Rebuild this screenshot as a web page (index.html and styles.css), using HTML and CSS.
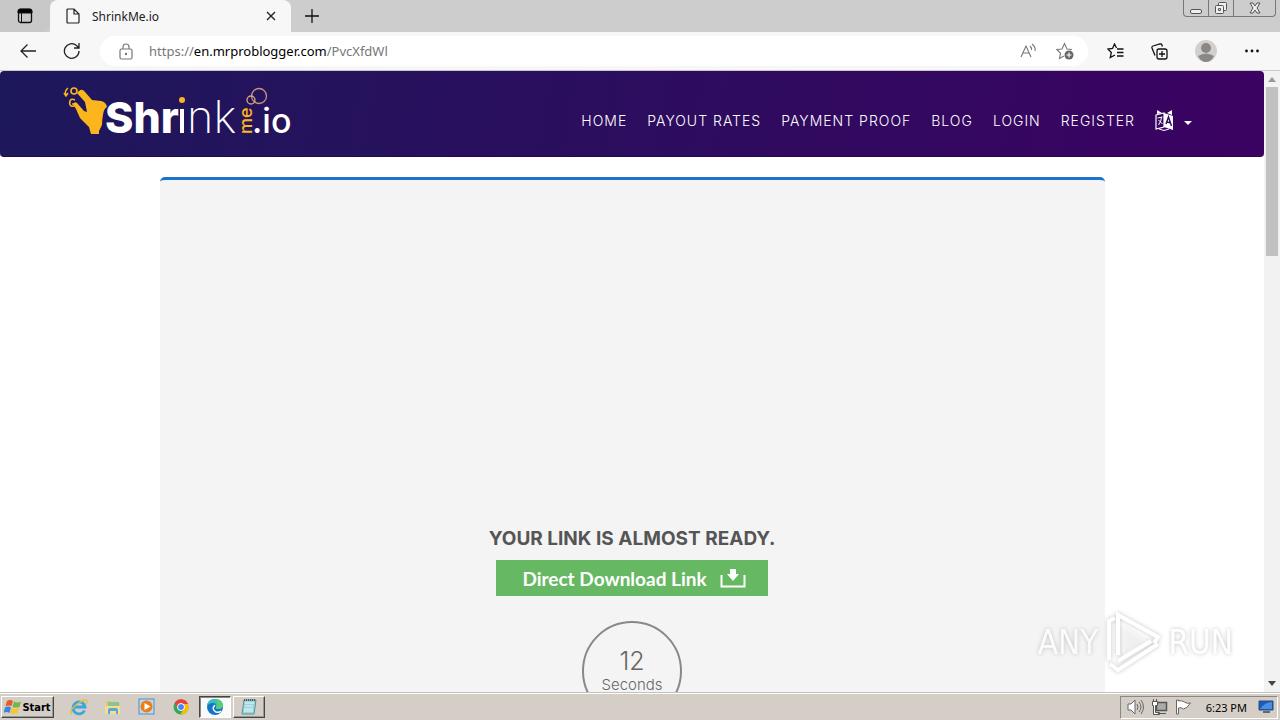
FILE: index.html
```html
<!DOCTYPE html>
<html lang="en">
<head>
<meta charset="utf-8">
<title>ShrinkMe.io</title>
<link rel="stylesheet" href="styles.css">
</head>
<body>
<div class="tabs">
  <button class="icon-btn tab-menu" aria-label="Tab actions"><svg width="16" height="16" viewBox="0 0 16 16"><rect x="1.5" y="1.5" width="13" height="13" rx="2" fill="none" stroke="#111" stroke-width="1.3"/><path d="M1 5V3q0-2 2-2h10q2 0 2 2v2zM4.500 5v10" stroke="#111"/></svg></button>
  <div class="tab">
    <svg width="14" height="16" viewBox="0 0 14 16" fill="none" stroke="#222" stroke-width="1.2"><path d="M1 2q0-1 1-1h6l5 5v8q0 1-1 1H2q-1 0-1-1zM8 1v5h5"/></svg>
    <span class="tab-title">ShrinkMe.io</span>
    <button class="icon-btn" aria-label="Close tab"><svg width="10" height="10" viewBox="0 0 10 10" stroke="#222" stroke-width="1.4"><path d="M1 1l8 8M9 1l-8 8"/></svg></button>
  </div>
  <button class="icon-btn new-tab" aria-label="New tab"><svg width="14" height="14" viewBox="0 0 14 14" stroke="#111" stroke-width="1.3"><path d="M7 0v14M0 7h14"/></svg></button>
  <div class="win">
    <button aria-label="Minimize"><svg width="14" height="14" viewBox="0 0 14 14"><rect x="1.500" y="8.500" width="11" height="4" rx="1.500" fill="#eee" stroke="#555"/></svg></button>
    <button aria-label="Restore"><svg width="14" height="14" viewBox="0 0 14 14" fill="#eee" stroke="#555"><rect x="4.500" y="1.500" width="8" height="8" rx="1"/><rect x="1.500" y="4.500" width="8" height="8" rx="1"/><path d="M4.500 7.500h2v2h-2z"/></svg></button>
    <button class="win-close" aria-label="Close"><svg width="12" height="12" viewBox="0 0 12 12" fill="#eee" stroke="#555"><path d="M1 1h3l2 3 2-3h3L8 6l3 5H8L6 8l-2 3H1l3-5z"/></svg></button>
  </div>
</div>

<div class="toolbar">
  <button class="icon-btn" aria-label="Back"><svg width="16" height="14" viewBox="0 0 16 14" fill="none" stroke="#222" stroke-width="1.300"><path d="M7.500 0.500L1 7l6.500 6.500M1 7h15"/></svg></button>
  <button class="icon-btn" aria-label="Refresh"><svg width="18" height="18" viewBox="0 0 18 18" fill="none" stroke="#222" stroke-width="1.300"><path d="M16 9A7.300 7.300 0 1 1 13.500 3.500L16 6M16 1v5h-5"/></svg></button>
  <div class="address">
    <svg width="14" height="17" viewBox="0 0 14 17" fill="none" stroke="#777" stroke-width="1.200"><rect x="1" y="6" width="12" height="10" rx="1.500"/><path d="M4 6V4q0-3 3-3t3 3v2"/><circle cx="7" cy="11" r=".6" fill="#777"/></svg>
    <div class="url">https://<b>en.mrproblogger.com</b>/PvcXfdWl</div>
    <button class="icon-btn" aria-label="Read aloud"><svg width="17" height="16" viewBox="0 0 17 16" fill="none" stroke="#777" stroke-width="1.100"><path d="M1 14L6 3l5 11M3 10h6M10 3q2 2 1.500 4M12 1q4 3 3 7"/></svg></button>
    <button class="icon-btn" aria-label="Add to favorites"><svg width="18" height="18" viewBox="0 0 18 18" fill="none" stroke="#777" stroke-width="1.100"><path d="M8 14l-4.500 2.500 1-5.200L.8 7.500 6 7 8.500 1.500 11 7l5 .5"/><circle cx="13" cy="13" r="4.500" fill="#666" stroke="none"/><path d="M13 10.500v5M10.500 13h5" stroke="#fff"/></svg></button>
  </div>
  <button class="icon-btn" aria-label="Favorites"><svg width="17" height="16" viewBox="0 0 17 16" fill="none" stroke="#111" stroke-width="1.300"><path d="M9.500 5L7.500 1 5.500 5.500.8 6l3.500 3.500-1 5L8 12M10 6h6.500M10 9.500h6.500M10 13h6.500"/></svg></button>
  <button class="icon-btn" aria-label="Collections"><svg width="17" height="17" viewBox="0 0 17 17" fill="none" stroke="#111" stroke-width="1.300"><rect x="6" y="6" width="10" height="10" rx="2"/><path d="M11 8v6M8 11h6M4 12.500L1 5q-.4-1.500 1-2l7-2q1.500-.3 2 1l.3 1.500"/></svg></button>
  <button class="icon-btn" aria-label="Profile"><svg width="22" height="22" viewBox="0 0 22 22"><circle cx="11" cy="11" r="11" fill="#d2d0ce"/><circle cx="11" cy="8" r="5" fill="#8b8785"/><path d="M3 16q8-5 16 0-3 6-8 6t-8-6z" fill="#8b8785"/></svg></button>
  <button class="icon-btn" aria-label="Settings and more"><svg width="16" height="4" viewBox="0 0 16 4" fill="#111"><circle cx="2.500" cy="2" r="1.400"/><circle cx="8" cy="2" r="1.400"/><circle cx="13.500" cy="2" r="1.400"/></svg></button>
</div>

<div class="viewport">
  <div class="page">
    <header class="site-header">
      <a href="#" class="logo" aria-label="ShrinkMe.io">
        <svg width="228" height="54" viewBox="0 0 228 54">
          <path d="M15 6q3-3 6 1l7 8 9 1q5 1 6 6-3 1-4 8-1 5-1 10l-3 6v3H27l-2-7-9-9-4-9-3-5q2-3 4-1l7 8 3 1-2-10-8-9z" fill="#fcb51d"/>
          <path d="M4 3q-4 3-2 8M0 8l2 3 2-3" fill="none" stroke="#fcb51d" stroke-width="1.500"/>
          <circle cx="10" cy="6" r="3" fill="none" stroke="#fcb51d" stroke-width="1.600"/>
          <path d="M11 15q-4-2-5 1t1 5q4 1 4-2H8" fill="none" stroke="#fcb51d" stroke-width="1.600"/>
          <text x="41" y="48" class="logo-bold">Shr</text>
          <path d="M116 24h4v24h-4z" fill="#fff"/>
          <circle cx="118" cy="15" r="3" fill="#fcb51d"/>
          <text x="123" y="48" class="logo-thin">nk</text>
          <text transform="translate(188 49) rotate(-90)" class="logo-me">me</text>
          <text x="188" y="48" class="logo-io">.io</text>
          <g fill="none"><circle cx="195" cy="11" r="7.500" stroke="#c9917e" stroke-width="1.300"/><circle cx="187" cy="15" r="4" stroke="#dda878" stroke-width="1.300"/></g>
        </svg>
      </a>
      <nav class="nav">
        <a href="#">HOME</a><a href="#">PAYOUT RATES</a><a href="#">PAYMENT PROOF</a><a href="#">BLOG</a><a href="#">LOGIN</a><a href="#">REGISTER</a>
        <a href="#" class="lang" aria-label="Language"><svg width="19" height="21" viewBox="0 0 19 21"><path d="M1 5l8-2v14l-8 2z" fill="none" stroke="#fff" stroke-width="1.200"/><path d="M9 3l9 3v14l-9-3zM2 0l5 3-5 1zM17 0v5l-5-2z" fill="#fff"/><path d="M2.500 8l5-1M3.500 15q3-4 3-8M3.500 10l4 4" stroke="#fff" fill="none"/><path d="M11 14l2.500-7 3 9M12 12l4 1" stroke="#320860" stroke-width="1.400" fill="none"/><path d="M4 19q5 3 10 0" stroke="#fff" fill="none"/></svg><span class="caret"></span></a>
      </nav>
    </header>
    <main class="card">
      <div class="ad-space"></div>
      <h1>YOUR LINK IS ALMOST READY.</h1>
      <button class="download">Direct Download Link<svg width="26" height="20" viewBox="0 0 26 20"><path d="M1.500 7v11.500h23V7" fill="none" stroke="#fff" stroke-width="2"/><path d="M10 1h6v5h3l-6 7-6-7h3z" fill="#fff"/></svg></button>
      <div class="timer"><span class="count">12</span><span class="unit">Seconds</span></div>
    </main>
  </div>
  <div class="scroll"><span class="arrow up"></span><span class="thumb"></span><span class="arrow down"></span></div>
  <div class="watermark"><span>ANY</span><svg width="58" height="64" viewBox="0 0 58 64" fill="none" stroke="#fff" stroke-width="4"><path d="M19 16v30l25-15z" fill="#fff" fill-opacity=".5" stroke="none"/><path d="M14 45V5l40 22-4 6M5 50V11l6-3M6 54l8 6 40-26M14 51l33-20"/></svg><span>RUN</span></div>
</div>

<footer class="taskbar">
  <button class="task start"><svg width="18" height="16" viewBox="0 0 18 16"><path d="M3 2q3-2 6 0L7.500 7q-3-1-6 0z" fill="#e8592b"/><path d="M10 2.500q3 2 7 0L15.500 8q-3 1-7 0z" fill="#75b743"/><path d="M1 8.500q3-2 6 0L5.500 14q-3-2-6 0z" fill="#3488d8"/><path d="M8 9q3 2 7 0l-1.500 5q-4 2-7 0z" fill="#f8c52c"/></svg>Start</button>
  <div class="quick">
    <button class="icon-btn" aria-label="Internet Explorer"><svg width="18" height="18" viewBox="0 0 18 18" fill="none"><path d="M14.500 12.500A6 6 0 1 1 15 9H4" stroke="#39a6df" stroke-width="2.800"/><path d="M2 16Q-2 12 9 5q7-5 8-2 0 1-1 3" stroke="#e5bd3e" stroke-width="1.400"/></svg></button>
    <button class="icon-btn" aria-label="Explorer"><svg width="18" height="18" viewBox="0 0 18 18"><path d="M2 3h5l1 2h8v11H2z" fill="#e6c56b"/><path d="M4 4h11v5H4z" fill="#8bc48c"/><path d="M1 8h15v8H1z" fill="#f5dc8e"/><path d="M4 16v-4q0-2 2-2h6q2 0 2 2v4h-2v-3H6v3z" fill="#59a9d8"/></svg></button>
    <button class="icon-btn" aria-label="Media Player"><svg width="18" height="18" viewBox="0 0 18 18"><rect x="1" y="1" width="15" height="15" fill="#b9d9f1" stroke="#5290c4"/><circle cx="8.500" cy="8.500" r="6" fill="#f17b16"/><path d="M6.500 5v7l6-3.500z" fill="#fff"/></svg></button>
    <button class="icon-btn" aria-label="Chrome"><svg width="18" height="18" viewBox="0 0 18 18"><circle cx="9" cy="9" r="7.500" fill="#34a853"/><path d="M2.500 5A7.500 7.500 0 0 1 16 6H9L6 10z" fill="#ea4335"/><path d="M16 6A7.500 7.500 0 0 1 8.500 16.500L12 10 10 6z" fill="#fbbc05"/><circle cx="9" cy="9" r="3.500" fill="#4285f4" stroke="#fff"/></svg></button>
  </div>
  <button class="task active" aria-label="Edge"><svg width="18" height="18" viewBox="0 0 18 18"><circle cx="9" cy="9" r="8" fill="#1674c4"/><path d="M1 9Q1 1 9 1q7 0 8 6 0 4-5 4-3 0-2-2 1-4-3-4-5 0-6 4z" fill="#35c1c0"/><path d="M10 1q6 1 7 6 0 4-5 4-2 0-2-1 3-3 0-9z" fill="#57cf72"/><path d="M9 7q-4 4 1 7 3 1 5-1" fill="none" stroke="#fff" stroke-width="1.500"/></svg></button>
  <button class="task" aria-label="Notepad"><svg width="18" height="18" viewBox="0 0 18 18"><path d="M4 2h12l-2 14H2z" fill="#9cd4dc" stroke="#5a929c"/><path d="M5 5h9M5 8h8M4 11h9M4 13h9" stroke="#e7f8fa"/><path d="M4 2h12" stroke="#555" stroke-width="2" stroke-dasharray="1 1"/></svg></button>
  <div class="tray">
    <svg width="17" height="16" viewBox="0 0 17 16" fill="#fff" stroke="#666"><path d="M1 5h3l4-4v14l-4-4H1z"/><path d="M10 5q2 3 0 6M12 3q4 5 0 10M14 1q5 7 0 14" fill="none"/></svg>
    <svg width="17" height="16" viewBox="0 0 17 16" fill="#fff" stroke="#555"><rect x="5.500" y="3.500" width="10" height="8" fill="#aaa" stroke-width="1.500"/><path d="M7 14.500h8M1.500 2.500h5v4h-2v7h4v2h-6v-9h-1zM2.500 0v2M5.500 0v2"/></svg>
    <svg width="17" height="16" viewBox="0 0 17 16" fill="#fff" stroke="#666"><path d="M1.500 1v14h2V9q3-1 5 1 3 0 7-6-4 1-6-1-3-2-6-1V1z"/></svg>
    <time>6:23 PM</time>
    <svg width="16" height="14" viewBox="0 0 16 14"><path d="M1 1h14v9H1z" fill="#1d5cb5" stroke="#294c83"/><path d="M2 9q5-7 12-7v7z" fill="#498ee0"/><path d="M5 12h7" stroke="#667" stroke-width="2"/></svg>
  </div>
</footer>
</body>
</html>
```
FILE: styles.css
```css
* { box-sizing: border-box; }
body { margin: 0; height: 100vh; display: flex; flex-direction: column; overflow: hidden; background: #fff; font-family: "Noto Sans", sans-serif; }
button { font: inherit; padding: 0; border: 0; background: none; }
svg { display: block; flex: none; }
a { color: inherit; text-decoration: none; }
.icon-btn { display: grid; place-items: center; flex: none; }

.tabs { display: flex; flex: none; height: 32px; background: #cdcdcd; }
.tab-menu { width: 50px; background: #c8c8c8; border-radius: 0 0 8px 0; }
.tab { display: flex; align-items: center; gap: 12px; width: 241px; padding: 0 15px 0 16px; background: #f7f7f7; border-radius: 8px 8px 0 0; }
.tab-title { flex: 1; font-size: 12px; color: #222; }
.new-tab { width: 42px; }
.win { display: flex; height: 17px; margin: 0 4px 0 auto; border: 1px solid #777; border-top: 0; border-radius: 0 0 4px 4px; }
.win button { display: grid; place-items: center; width: 25px; border-right: 1px solid #777; }
.win .win-close { width: 41px; border-right: 0; }

.toolbar { display: flex; align-items: center; flex: none; height: 39px; padding: 0 20px; gap: 27px; background: #f7f7f7; border-bottom: 1px solid #c9c9c9; }
.address { display: flex; align-items: center; flex: 1; height: 30px; margin: 0 -8px; padding: 0 14px 0 19px; gap: 19px; background: #fff; border-radius: 16px; }
.url { flex: 1; margin-left: -3px; font: 13px "Noto Sans", sans-serif; color: #777; }
.url b { font-weight: 400; color: #000; }

.viewport { position: relative; display: flex; flex: 1; min-height: 0; }
.page { flex: 1; overflow: hidden; }
.site-header { display: flex; align-items: center; justify-content: space-between; height: 86px; padding: 0 72px 0 64px; border-radius: 4px; background: linear-gradient(100deg, #1d185b, #3b0262); border-bottom: 1px solid #25054b; color: #fff; }
.logo { padding-bottom: 4px; }
.logo svg { overflow: visible; }
.logo text { font-family: Inter, sans-serif; fill: #fff; }
.logo .logo-bold { font-size: 43px; font-weight: 800; }
.logo .logo-thin { font-size: 45px; font-weight: 200; }
.logo .logo-me { font-size: 18px; font-weight: 500; fill: #fcb51d; }
.logo .logo-io { font-size: 34px; font-weight: 500; }
.nav { display: flex; align-items: center; gap: 20px; padding-top: 14px; font: 300 14px Inter, sans-serif; letter-spacing: 1px; }
.lang { display: flex; align-items: center; gap: 10px; }
.caret { border: 4px solid transparent; border-top-color: #fff; border-bottom: 0; margin-top: 4px; }

.card { display: flex; flex-direction: column; align-items: center; max-width: 945px; min-height: 600px; margin: 20px auto; border-top: 3px solid #1d73cb; border-radius: 5px; background: #f4f4f4; }
.ad-space { height: 347px; }
h1 { margin: 0; font: 700 19px/24px Inter, sans-serif; color: #555; }
.download { display: flex; align-items: center; gap: 13px; height: 36px; margin-top: 9px; padding: 0 22px 0 26px; background: #67b863; color: #fff; font: 700 19px Lato, sans-serif; }
.timer { display: flex; flex-direction: column; align-items: center; width: 100px; height: 100px; margin-top: 25px; padding-top: 22px; border: 2px solid #888; border-radius: 50%; color: #666; font-family: Inter, sans-serif; font-weight: 300; }
.count { font-size: 25px; line-height: 32px; }
.unit { font-size: 15px; line-height: 16px; }

.scroll { display: flex; flex-direction: column; align-items: center; width: 16px; background: #f2f2f2; padding: 6px 0; }
.arrow { border: 4px solid transparent; }
.up { border-top: 0; border-bottom: 5px solid #999; }
.down { border-bottom: 0; border-top: 5px solid #444; margin-top: auto; }
.thumb { width: 12px; height: 169px; margin-top: 5px; background: #c1c1c1; }
.watermark { position: absolute; right: 47px; bottom: 18px; display: flex; align-items: center; gap: 6px; color: #fff; font: 33px "Liberation Sans Narrow", "DejaVu Sans Condensed", sans-serif; filter: drop-shadow(0 0 2px #aaa); opacity: .7; }

.taskbar { display: flex; align-items: center; flex: none; height: 28px; padding: 1px 2px 0 1px; background: #d5cec6; border-top: 1px solid #c5c1bb; box-shadow: inset 0 1px #fff; }
.task { display: flex; align-items: center; justify-content: center; width: 32px; height: 22px; margin-right: 2px; border: 1px solid; border-color: #fff #444 #444 #fff; box-shadow: inset -1px -1px #999; }
.start { width: 53px; font: 700 11px "DejaVu Sans Condensed", sans-serif; }
.active { background: #fafafa; border-color: #444 #fff #fff #444; box-shadow: inset 1px 1px #888; }
.quick { display: flex; gap: 16px; margin: 0 9px 0 14px; }
.tray { display: flex; align-items: center; gap: 7px; height: 23px; margin-left: auto; padding: 0 3px 0 6px; border: 1px solid; border-color: #888 #fff #fff #888; }
.tray time { margin: 0 4px 0 7px; font-size: 11px; }
```
